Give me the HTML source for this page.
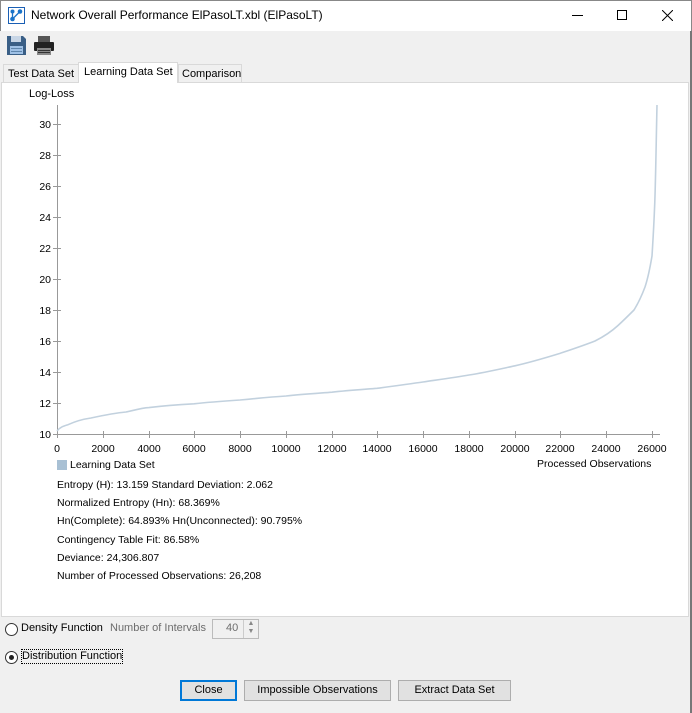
<!DOCTYPE html>
<html><head><meta charset="utf-8"><style>
*{margin:0;padding:0;box-sizing:border-box}
body{width:692px;height:713px;background:#f0f0f0;font-family:"Liberation Sans",Arial,sans-serif;font-size:12px;color:#000;position:relative;overflow:hidden}
.a{position:absolute;white-space:nowrap}
.btn{position:absolute;height:21px;border:1px solid #adadad;background:#e1e1e1;text-align:center;line-height:19px;font-size:11px;white-space:nowrap}
.tab{position:absolute;height:19px;border:1px solid #d9d9d9;border-bottom:none;background:#f0f0f0;line-height:18px;padding:0 4px;font-size:11px;white-space:nowrap;overflow:hidden}
</style></head><body>
<div class="a" style="left:0;top:0;width:692px;height:31px;background:#fff;border:1px solid #888;border-bottom:none"></div>
<svg class="a" style="left:8px;top:7px" width="17" height="17" viewBox="0 0 17 17"><rect x="0.5" y="0.5" width="16" height="16" fill="#fff" stroke="#1a5fb4"/><circle cx="4.5" cy="12" r="2.3" fill="#1a73c9"/><circle cx="12" cy="4.5" r="2.3" fill="#1a73c9"/><circle cx="4.5" cy="4.5" r="2" fill="#1a73c9"/><path d="M4.5 12 L12 4.5 M4.5 4.5 V12" stroke="#1a73c9" stroke-width="1.3"/></svg>
<div class="a" style="left:31px;top:8px;font-size:12px">Network Overall Performance ElPasoLT.xbl (ElPasoLT)</div>
<div class="a" style="left:572px;top:15px;width:11px;height:1px;background:#000"></div>
<div class="a" style="left:617px;top:10px;width:10px;height:10px;border:1px solid #000"></div>
<svg class="a" style="left:662px;top:10px" width="11" height="11"><path d="M0 0L11 11M11 0L0 11" stroke="#000" stroke-width="1"/></svg>
<div class="a" style="left:690px;top:31px;width:2px;height:682px;background:#777"></div>
<svg class="a" style="left:6px;top:35px" width="21" height="21" viewBox="0 0 21 21"><path d="M1 1H17L20 4V20H1Z" fill="#3a5f86"/><rect x="5" y="1" width="10" height="6" fill="#c8d6e6"/><rect x="4" y="11" width="13" height="8" fill="#9fc1e6"/><rect x="5" y="13" width="11" height="1" fill="#5f86ad"/><rect x="5" y="16" width="11" height="1" fill="#5f86ad"/></svg>
<svg class="a" style="left:33px;top:35px" width="22" height="21" viewBox="0 0 22 21"><rect x="5" y="1" width="12" height="6" fill="#555"/><rect x="1" y="7" width="20" height="9" rx="1" fill="#222"/><rect x="4" y="13" width="14" height="7" fill="#888"/><rect x="5" y="15" width="12" height="1" fill="#333"/><rect x="5" y="17" width="12" height="1" fill="#333"/></svg>
<div class="tab" style="left:3px;top:64px;width:76px">Test Data Set</div>
<div class="tab" style="left:178px;top:64px;width:64px;padding:0 3px">Comparison</div>
<div class="tab" style="left:78px;top:62px;width:100px;height:21px;background:#fff;z-index:2;line-height:19px;padding:0 5px">Learning Data Set</div>
<div class="a" style="left:1px;top:82px;width:688px;height:535px;background:#fff;border:1px solid #d9d9d9"></div>
<svg class="a" style="left:0;top:82px" width="690" height="400" viewBox="0 82 690 400" font-family="Liberation Sans, Arial, sans-serif" font-size="11">
<text x="29" y="97">Log-Loss</text>
<g stroke="#999" stroke-width="1">
<line x1="57.5" y1="105" x2="57.5" y2="435"/>
<line x1="57" y1="434.5" x2="660" y2="434.5"/>
</g>
<g stroke="#999">
<path d="M53 434.5h8M53 403.5h8M53 372.5h8M53 341.5h8M53 310.5h8M53 279.5h8M53 248.5h8M53 217.5h8M53 186.5h8M53 155.5h8M53 124.5h8"/>
<path d="M57.5 431v7M103.5 431v7M149.5 431v7M194.5 431v7M240.5 431v7M286.5 431v7M332.5 431v7M377.5 431v7M423.5 431v7M469.5 431v7M515.5 431v7M560.5 431v7M606.5 431v7M652.5 431v7"/>
</g>
<g text-anchor="end" font-size="10.5">
<text x="51" y="438">10</text><text x="51" y="407">12</text><text x="51" y="376">14</text><text x="51" y="345">16</text><text x="51" y="314">18</text><text x="51" y="283">20</text><text x="51" y="252">22</text><text x="51" y="221">24</text><text x="51" y="190">26</text><text x="51" y="159">28</text><text x="51" y="128">30</text>
</g>
<g text-anchor="middle" font-size="10.5">
<text x="57" y="452">0</text><text x="103" y="452">2000</text><text x="149" y="452">4000</text><text x="194" y="452">6000</text><text x="240" y="452">8000</text><text x="286" y="452">10000</text><text x="332" y="452">12000</text><text x="377" y="452">14000</text><text x="423" y="452">16000</text><text x="469" y="452">18000</text><text x="515" y="452">20000</text><text x="560" y="452">22000</text><text x="606" y="452">24000</text><text x="652" y="452">26000</text>
</g>
<path d="M57 431 C60 427 64 426 68 424.7 C76 421 84 419 91 418 C105 415 115 413 126 412 C135 410 142 408 149 407.6 C165 405.5 180 404.5 194 403.8 C210 402 225 401 240 400 C255 398.5 270 397 286 396 C300 394.5 315 393.5 332 392.2 C347 390.5 362 389.5 377 388.3 C392 386.5 408 384 423 382 C440 379.5 455 377.5 469 375 C485 372.5 500 369 515 365.8 C530 362.5 545 358 560 353.4 C573 349 585 345 595 341 C605 336 612 331 618 325.5 C624 320 629 315 634 310 C639 302 642 295 645 287 C648 278 650 268 652 256 C653 240 654 222 654.5 209 C655.5 190 656 150 657 105" fill="none" stroke="#c2d1de" stroke-width="1.6"/>
</svg>
<div class="a" style="left:57px;top:460px;width:10px;height:10px;background:#a8c0d4"></div>
<div class="a" style="left:70px;top:459px;font-size:10.5px">Learning Data Set</div>
<div class="a" style="left:537px;top:458px;font-size:10.5px">Processed Observations</div>
<div class="a" style="left:57px;top:476px;font-size:10.5px;line-height:18.2px">Entropy (H): 13.159 Standard Deviation: 2.062<br>Normalized Entropy (Hn): 68.369%<br>Hn(Complete): 64.893% Hn(Unconnected): 90.795%<br>Contingency Table Fit: 86.58%<br>Deviance: 24,306.807<br>Number of Processed Observations: 26,208</div>
<div class="a" style="left:5px;top:623px;width:13px;height:13px;border:1px solid #333;border-radius:50%;background:#fff"></div>
<div class="a" style="left:21px;top:622px;font-size:11px">Density Function</div>
<div class="a" style="left:110px;top:622px;font-size:11px;color:#6d6d6d">Number of Intervals</div>
<div class="a" style="left:212px;top:619px;width:47px;height:20px;border:1px solid #bbb;background:#f0f0f0"></div>
<div class="a" style="left:226px;top:622px;font-size:11px;color:#6d6d6d">40</div>
<div class="a" style="left:243px;top:620px;width:15px;height:18px;border-left:1px solid #ccc;font-size:7px;color:#888;text-align:center;line-height:8px">▲<br>▼</div>
<div class="a" style="left:5px;top:651px;width:13px;height:13px;border:1px solid #333;border-radius:50%;background:#fff"></div>
<div class="a" style="left:9px;top:655px;width:5px;height:5px;border-radius:50%;background:#222"></div>
<div class="a" style="left:21px;top:649px;font-size:11px;border:1px dotted #000;padding:0 0 1px 0">Distribution Function</div>
<div class="btn" style="left:180px;top:680px;width:57px;border:2px solid #0078d7;line-height:17px">Close</div>
<div class="btn" style="left:244px;top:680px;width:147px">Impossible Observations</div>
<div class="btn" style="left:398px;top:680px;width:113px">Extract Data Set</div>
</body></html>
